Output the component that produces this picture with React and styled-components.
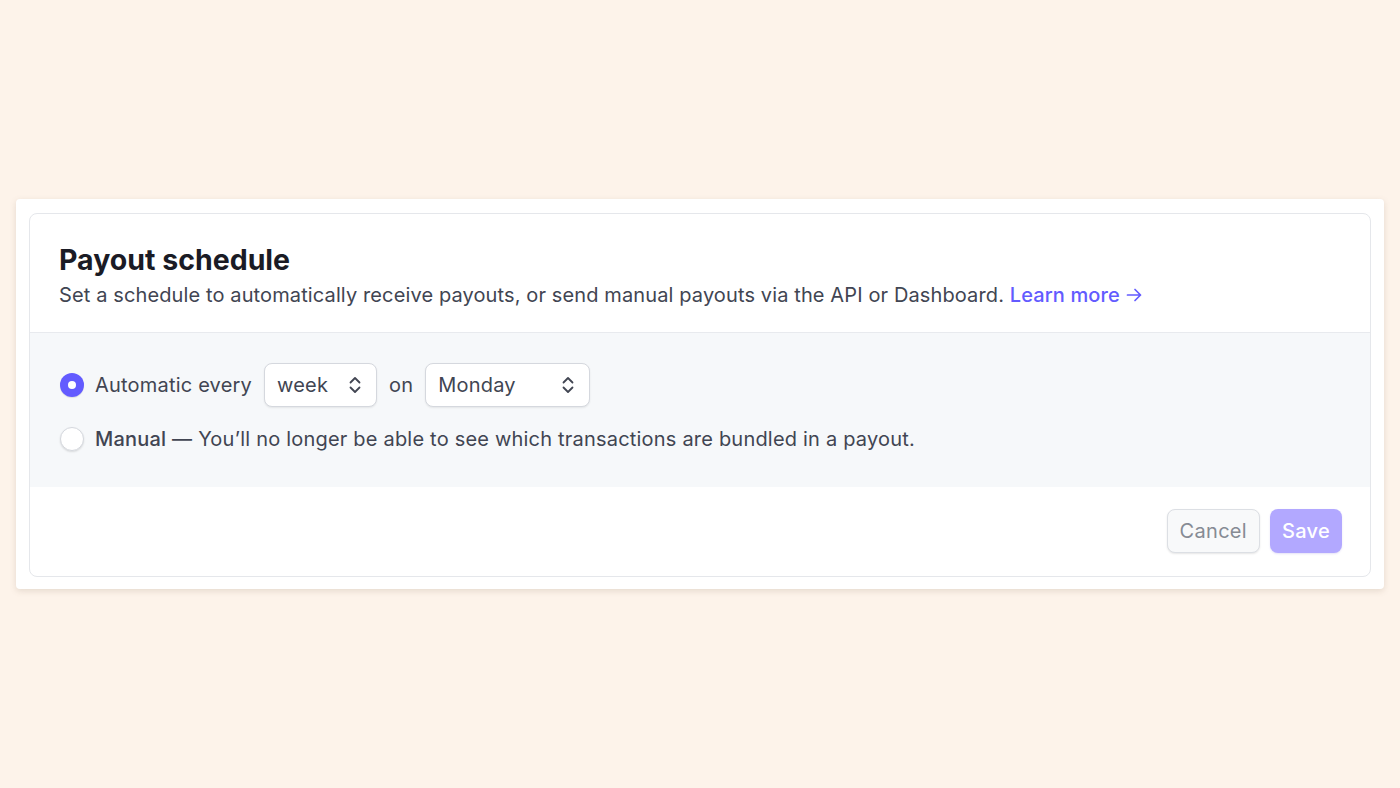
import React, { useState } from "react";
import styled, { createGlobalStyle } from "styled-components";

const GlobalStyle = createGlobalStyle`
  html, body {
    margin: 0;
    padding: 0;
    background: #fdf3ea;
    font-family: Inter, "Noto Sans", sans-serif;
    -webkit-font-smoothing: antialiased;
  }
`;

const Page = styled.main`
  height: 788px;
  padding: 199px 16px 0;
  box-sizing: border-box;
`;

const Frame = styled.div`
  background: #fff;
  border-radius: 4px;
  box-shadow: 0 2px 6px rgba(120, 100, 80, 0.18);
  padding: 14px 13px 12px 13px;
`;

const Card = styled.section`
  border: 1px solid #e5e7eb;
  border-radius: 8px;
  overflow: hidden;
`;

const Header = styled.header`
  padding: 29px 30px 23px 29px;
  border-bottom: 1px solid #e8eaee;
`;

const Title = styled.h1`
  margin: 0 0 4px;
  font-size: 28.5px;
  font-weight: 700;
  letter-spacing: 0;
  color: #1a1b25;
  line-height: 34px;
`;

const Subtitle = styled.p`
  margin: 0;
  font-size: 20px;
  letter-spacing: 0.12px;
  line-height: 28px;
  color: #414552;
`;

const Link = styled.a`
  color: #635bff;
  font-weight: 500;
  text-decoration: none;
  cursor: pointer;
`;

const Body = styled.div`
  background: #f6f8fa;
  padding: 30px 30px 26px;
  display: flex;
  flex-direction: column;
  gap: 10px;
`;

const Row = styled.label`
  display: flex;
  align-items: center;
  gap: 12px;
  font-size: 20px;
  letter-spacing: 0.2px;
  color: #414552;
  min-height: 44px;
  cursor: pointer;
`;

const Radio = styled.span`
  width: 24px;
  height: 24px;
  margin-right: -1px;
  border-radius: 50%;
  box-sizing: border-box;
  flex-shrink: 0;
  background: ${(p) => (p.checked ? "#635bff" : "#fff")};
  border: ${(p) => (p.checked ? "none" : "1px solid #d5d8de")};
  box-shadow: ${(p) =>
    p.checked ? "0 1px 1px rgba(0,0,0,0.1)" : "0 1px 2px rgba(0,0,0,0.12)"};
  display: flex;
  align-items: center;
  justify-content: center;
  &::after {
    content: "";
    width: 8px;
    height: 8px;
    border-radius: 50%;
    background: #fff;
    display: ${(p) => (p.checked ? "block" : "none")};
  }
`;

const Strong = styled.span`
  font-weight: 500;
  color: #414552;
`;

const Select = styled.div`
  width: ${(p) => p.width}px;
  height: 44px;
  box-sizing: border-box;
  border: 1px solid #d5d8de;
  border-radius: 8px;
  background: #fff;
  box-shadow: 0 1px 2px rgba(0, 0, 0, 0.08);
  display: flex;
  align-items: center;
  justify-content: space-between;
  padding: 0 14px 0 12px;
  color: #414552;
  font-size: 20px;
`;

const Footer = styled.footer`
  display: flex;
  justify-content: flex-end;
  gap: 10px;
  padding: 22px 28px 23px;
`;

const Button = styled.button`
  height: 44px;
  padding: 0 12px;
  border-radius: 8px;
  font-family: inherit;
  font-size: 20px;
  letter-spacing: 0.3px;
  font-weight: ${(p) => (p.primary ? 500 : 400)};
  cursor: pointer;
  border: ${(p) => (p.primary ? "none" : "1px solid #dcdfe4")};
  background: ${(p) => (p.primary ? "#b2a8ff" : "#f8f9fa")};
  color: ${(p) => (p.primary ? "#fff" : "#868b94")};
  box-shadow: ${(p) =>
    p.primary ? "0 1px 2px rgba(80,60,200,0.15)" : "0 1px 2px rgba(0,0,0,0.1)"};
`;

const Chevrons = () => (
  <svg width="14" height="20" viewBox="0 0 14 20" fill="none">
    <path
      d="M2.5 7.5 7 3l4.5 4.5M2.5 12.5 7 17l4.5-4.5"
      stroke="#414552"
      strokeWidth="1.8"
      strokeLinecap="round"
      strokeLinejoin="round"
    />
  </svg>
);

const Arrow = () => (
  <svg
    width="17"
    height="16"
    viewBox="0 0 17 16"
    fill="none"
    style={{ verticalAlign: "-1px", marginLeft: 6 }}
  >
    <path
      d="M1.5 8h13M9 2.5 14.5 8 9 13.5"
      stroke="#635bff"
      strokeWidth="1.7"
      strokeLinecap="round"
      strokeLinejoin="round"
    />
  </svg>
);

export default function App() {
  const [mode, setMode] = useState("auto");
  return (
    <Page>
      <GlobalStyle />
      <Frame>
        <Card>
          <Header>
            <Title>Payout schedule</Title>
            <Subtitle>
              Set a schedule to automatically receive payouts, or send manual
              payouts via the API or Dashboard.{" "}
              <Link>
                Learn more
                <Arrow />
              </Link>
            </Subtitle>
          </Header>
          <Body>
            <Row onClick={() => setMode("auto")}>
              <Radio checked={mode === "auto"} />
              <span>Automatic every</span>
              <Select width={113}>
                week <Chevrons />
              </Select>
              <span>on</span>
              <Select width={165}>
                Monday <Chevrons />
              </Select>
            </Row>
            <Row onClick={() => setMode("manual")}>
              <Radio checked={mode === "manual"} />
              <span>
                <Strong>Manual</Strong> — You’ll no longer be able to see which
                transactions are bundled in a payout.
              </span>
            </Row>
          </Body>
          <Footer>
            <Button>Cancel</Button>
            <Button primary>Save</Button>
          </Footer>
        </Card>
      </Frame>
    </Page>
  );
}
